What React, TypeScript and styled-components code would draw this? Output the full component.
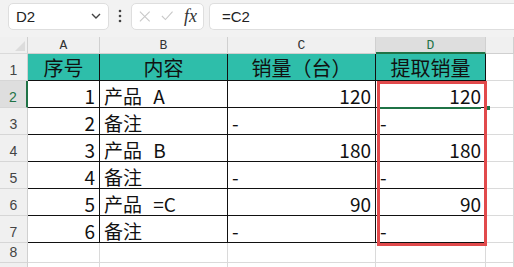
import React from 'react'
import styled, { createGlobalStyle } from 'styled-components'

const GlobalStyle = createGlobalStyle`
  html, body {
    margin: 0;
    padding: 0;
    background: #ffffff;
    overflow: hidden;
  }
  * { box-sizing: border-box; }
`

const TEAL = '#2ebeaa'
const GREEN = '#1f7346'
const CJK = `"Noto Sans CJK SC", "Noto Sans", sans-serif`

type Kind = 'corner' | 'colhead' | 'rowhead' | 'head' | 'data' | 'empty'

const columns = ['A', 'B', 'C', 'D']

const rows: string[][] = [
  ['序号', '内容', '销量（台）', '提取销量'],
  ['1', '产品 A', '120', '120'],
  ['2', '备注', '-', '-'],
  ['3', '产品 B', '180', '180'],
  ['4', '备注', '-', '-'],
  ['5', '产品 =C', '90', '90'],
  ['6', '备注', '-', '-'],
]

const App: React.FC = () => {
  const alignFor = (col: number, text: string) => {
    if (col === 1) return 'left'
    if (text === '-') return 'left'
    return 'right'
  }

  return (
    <>
      <GlobalStyle />
      <Toolbar>
        <NameBox>
          <span>D2</span>
          <svg width="12" height="12" viewBox="0 0 12 12">
            <path d="M2 4 L6 8 L10 4" fill="none" stroke="#444" strokeWidth="1.4" />
          </svg>
        </NameBox>
        <Dots>
          <svg width="4" height="14" viewBox="0 0 4 14">
            <circle cx="2" cy="2" r="1.3" fill="#444" />
            <circle cx="2" cy="7" r="1.3" fill="#444" />
            <circle cx="2" cy="12" r="1.3" fill="#444" />
          </svg>
        </Dots>
        <FxBox>
          <svg width="13" height="13" viewBox="0 0 13 13">
            <path d="M1 1 L12 12 M12 1 L1 12" stroke="#c8c8c8" strokeWidth="1.2" />
          </svg>
          <svg width="14" height="12" viewBox="0 0 14 12">
            <path d="M1 6 L5 10 L13 1" fill="none" stroke="#c8c8c8" strokeWidth="1.2" />
          </svg>
          <FxLabel>fx</FxLabel>
        </FxBox>
        <FormulaBox>=C2</FormulaBox>
      </Toolbar>

      <Sheet>
        <Grid>
          <Cell $kind="corner">
            <svg width="10" height="10" viewBox="0 0 10 10">
              <path d="M10 0 L10 10 L0 10 Z" fill="#dcdcdc" />
            </svg>
          </Cell>
          {columns.map((c) => (
            <Cell key={c} $kind="colhead" $active={c === 'D'}>
              {c}
            </Cell>
          ))}
          <Cell $kind="colhead" />

          {rows.map((row, r) => (
            <React.Fragment key={r}>
              <Cell $kind="rowhead" $active={r === 1}>
                {r + 1}
              </Cell>
              {row.map((text, c) => (
                <Cell
                  key={c}
                  $kind={r === 0 ? 'head' : 'data'}
                  $align={r === 0 ? 'center' : alignFor(c, text)}
                >
                  {text}
                </Cell>
              ))}
              <Cell $kind="empty" />
            </React.Fragment>
          ))}

          <Cell $kind="rowhead">8</Cell>
          {columns.map((c) => (
            <Cell key={c} $kind="empty" />
          ))}
          <Cell $kind="empty" />

          <Cell $kind="rowhead" />
          {columns.map((c) => (
            <Cell key={c} $kind="empty" />
          ))}
          <Cell $kind="empty" />
        </Grid>

        <Selection />
        <ActiveLine />
        <FillHandle />
      </Sheet>
    </>
  )
}

const Toolbar = styled.div`
  display: flex;
  align-items: center;
  height: 37px;
  padding: 0 0 5px 8px;
  background: #f2f2f2;
  font-family: "Liberation Sans", Arial, sans-serif;
  font-size: 15px;
  color: #222;
`

const Box = styled.div`
  height: 27px;
  background: #ffffff;
  border: 1px solid #dedede;
  border-radius: 5px;
  display: flex;
  align-items: center;
`

const NameBox = styled(Box)`
  width: 101px;
  padding: 0 6px 0 7px;
  justify-content: space-between;
`

const Dots = styled.div`
  width: 22px;
  display: flex;
  justify-content: center;
`

const FxBox = styled(Box)`
  width: 73px;
  padding: 0 6px 0 7px;
  gap: 10px;
`

const FxLabel = styled.span`
  font-family: "Liberation Serif", "Times New Roman", serif;
  font-style: italic;
  font-size: 18px;
  color: #333;
  margin-left: 1px;
`

const FormulaBox = styled(Box)`
  flex: 1;
  margin-left: 5px;
  padding-left: 12px;
  border-right: none;
  border-radius: 5px 0 0 5px;
`

const Sheet = styled.div`
  position: relative;
`

const Grid = styled.div`
  display: grid;
  grid-template-columns: 28px 72px 128px 148px 110px 1fr;
  grid-template-rows: 17px repeat(7, 27px) 20px 20px;
`

const Cell = styled.div<{ $kind: Kind; $align?: 'left' | 'right' | 'center'; $active?: boolean }>`
  display: flex;
  overflow: hidden;
  white-space: pre;
  border-right: 1px solid #dadada;
  border-bottom: 1px solid #dadada;
  font-family: ${CJK};
  font-size: 19px;
  word-spacing: 7px;
  color: #111;
  line-height: 1;
  align-items: center;
  padding: 2px 4px 0;
  justify-content: ${(p) =>
    p.$align === 'left' ? 'flex-start' : p.$align === 'center' ? 'center' : 'flex-end'};

  ${(p) =>
    p.$kind === 'corner' &&
    `
    background: #f0f0f0;
    justify-content: flex-end;
    align-items: flex-end;
    padding: 0 2px 2px 0;
    border-right-color: #d0d0d0;
  `}

  ${(p) =>
    p.$kind === 'colhead' &&
    `
    background: ${p.$active ? '#dedede' : '#f0f0f0'};
    font-family: "Liberation Mono", "Courier New", monospace;
    font-size: 13px;
    color: ${p.$active ? GREEN : '#333'};
    justify-content: center;
    padding: 1px 0 0;
    border-right-color: #d0d0d0;
    border-bottom: ${p.$active ? `2px solid ${GREEN}` : '1px solid #d0d0d0'};
  `}

  ${(p) =>
    p.$kind === 'rowhead' &&
    `
    background: ${p.$active ? '#dedede' : '#f0f0f0'};
    font-family: "Liberation Sans", Arial, sans-serif;
    font-size: 14px;
    color: ${p.$active ? GREEN : '#444'};
    justify-content: center;
    align-items: flex-end;
    padding: 0 0 3px;
    border-right: ${p.$active ? `2px solid ${GREEN}` : '1px solid #d0d0d0'};
    border-bottom-color: #d6d6d6;
  `}

  ${(p) =>
    p.$kind === 'head' &&
    `
    background: ${TEAL};
    border-right-color: #111;
    border-bottom-color: #111;
    font-size: 20px;
    word-spacing: 0;
  `}

  ${(p) =>
    p.$kind === 'data' &&
    `
    background: #ffffff;
    border-right-color: #111;
    border-bottom-color: #111;
  `}
`

const Selection = styled.div`
  position: absolute;
  left: 377px;
  top: 44px;
  width: 110px;
  height: 165px;
  border: 3px solid #e14a4c;
  pointer-events: none;
`

const ActiveLine = styled.div`
  position: absolute;
  left: 380px;
  top: 70px;
  width: 101px;
  height: 2px;
  background: ${GREEN};
`

const FillHandle = styled.div`
  position: absolute;
  left: 487px;
  top: 69px;
  width: 3px;
  height: 4px;
  background: ${GREEN};
`

export default App
